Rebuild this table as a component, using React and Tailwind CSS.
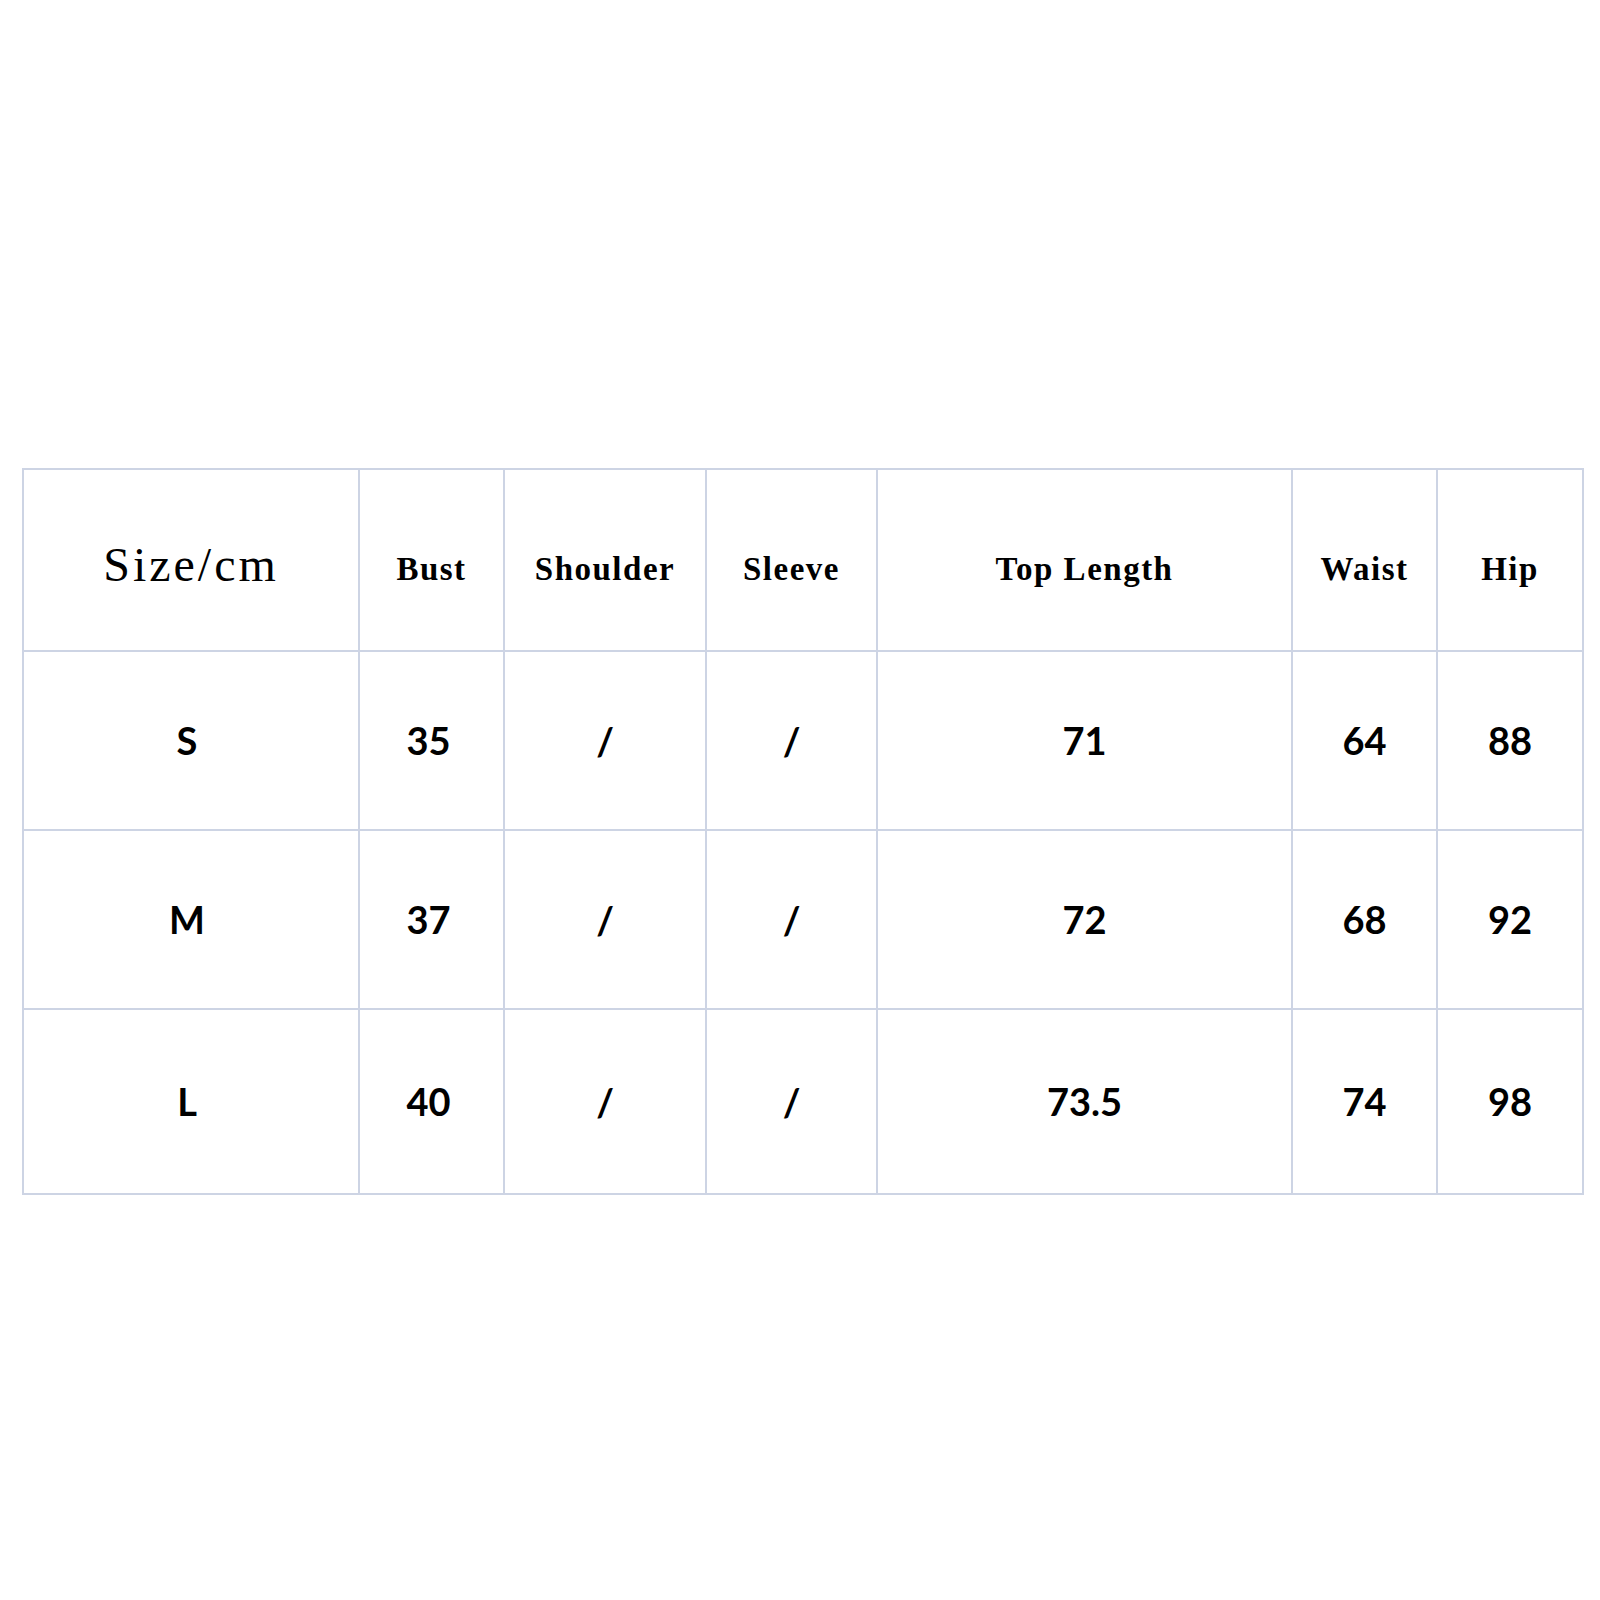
import React from 'react';

const headers = ['Bust', 'Shoulder', 'Sleeve', 'Top Length', 'Waist', 'Hip'];

const rows = [
  ['S', '35', '/', '/', '71', '64', '88'],
  ['M', '37', '/', '/', '72', '68', '92'],
  ['L', '40', '/', '/', '73.5', '74', '98'],
];

// first two columns sit a little left of centre in the chart
const cellPad = ['pr-[8px]', 'pr-[6px]', '', '', '', '', ''];

const App = () => {
  return (
    <div className="min-h-[1600px] w-[1600px] bg-white pt-[468px] pl-[22px]">
      {/* Size chart */}
      <div className="grid w-[1562px] grid-cols-[334px_143px_200px_169px_413px_143px_144px] grid-rows-[180px_177px_177px_183px] gap-[2px] bg-[#cdd4e4] p-[2px]">
        <div className="flex items-center justify-center bg-white pt-[10px] text-[48px] tracking-[3px] text-black [font-family:'Liberation_Serif',serif]">
          Size/cm
        </div>
        {headers.map((h) => (
          <div
            key={h}
            className="flex items-center justify-center whitespace-pre bg-white pt-[20px] text-[33px] font-bold tracking-[1.5px] text-black [font-family:'Liberation_Serif',serif]"
          >
            {h}
          </div>
        ))}

        {rows.map((row) =>
          row.map((cell, i) => (
            <div
              key={row[0] + i}
              className={`flex items-center justify-center bg-white text-[38px] font-bold text-black [font-family:Lato,'Open_Sans',sans-serif] ${cellPad[i]}`}
            >
              {cell}
            </div>
          ))
        )}
      </div>
    </div>
  );
};

export default App;
